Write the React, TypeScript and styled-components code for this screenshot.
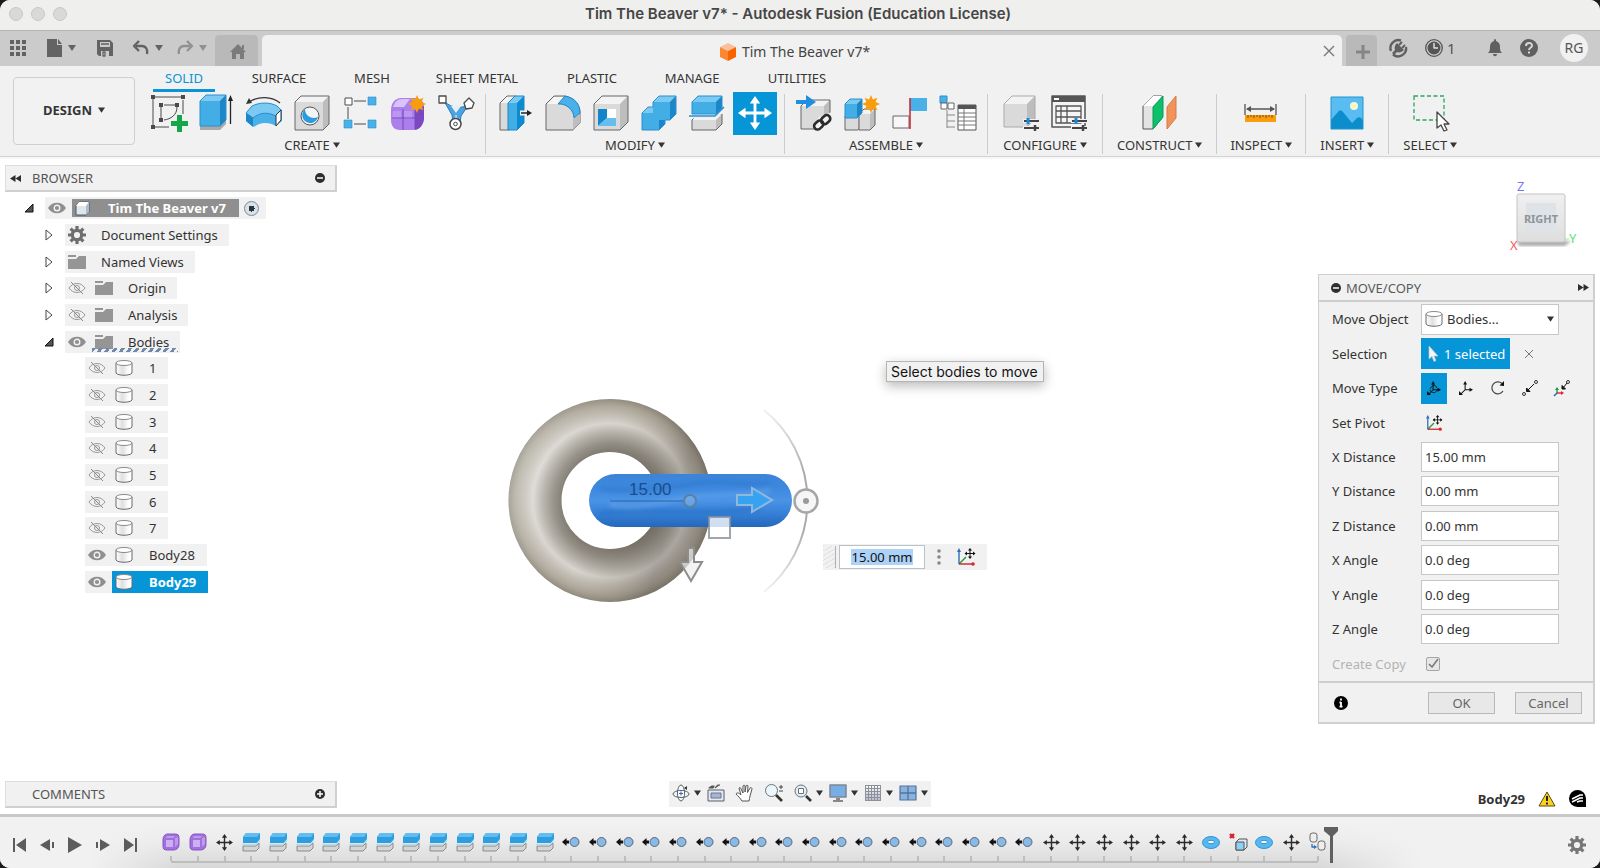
import React from "react";
import styled, { createGlobalStyle, css } from "styled-components";

const UI_FONT = '"Noto Sans", "Open Sans", sans-serif';
const SYSTEM_FONT = 'Inter, "Liberation Sans", sans-serif';

const GlobalStyle = createGlobalStyle`
  * { box-sizing: border-box; }
  body { margin: 0; background: #1b1b1b; font-family: ${UI_FONT}; font-size: 13px; line-height: 18px; color: #333; }
  button, input, select { font: inherit; color: inherit; }
  svg { display: block; flex: none; overflow: visible; }
`;

/* ---------- window frame ---------- */

const Window = styled.div`
  display: flex;
  flex-direction: column;
  min-height: 100vh;
  background: #fff;
  border-radius: 10px;
  overflow: hidden;
`;

const TitleBar = styled.header`
  display: grid;
  grid-template-columns: 100px 1fr 104px;
  align-items: center;
  height: 31px;
  padding: 0 0 2px;
  background: #efefee;
  border-bottom: 1px solid #b4b4b4;
`;

const Lights = styled.div`
  display: flex;
  gap: 8px;
  padding-left: 9px;
`;

const Light = styled.span`
  width: 14px;
  height: 14px;
  border-radius: 50%;
  background: #dad9d8;
  border: 1px solid #c8c7c6;
`;

const Title = styled.h1`
  margin: 0;
  font: 600 15px/20px ${SYSTEM_FONT};
  text-align: center;
  color: #464646;
`;

const QuickBar = styled.div`
  display: flex;
  align-items: stretch;
  height: 35px;
  background: #cbcbcb;
  color: #636363;
`;

const QuickTools = styled.div`
  display: flex;
  align-items: center;
  width: 215px;
  padding: 2px 0 3px 9px;
`;

const IconButton = styled.button<{ $w?: number; $dim?: boolean }>`
  display: flex;
  align-items: center;
  justify-content: center;
  gap: 6px;
  width: ${(p) => (p.$w ? `${p.$w}px` : "auto")};
  padding: 0;
  border: 0;
  background: none;
  color: inherit;
  opacity: ${(p) => (p.$dim ? 0.55 : 1)};
`;

const EdgeTab = styled.button<{ $w: number }>`
  display: flex;
  align-items: center;
  justify-content: center;
  width: ${(p) => p.$w}px;
  margin: 4px 4px 0 0;
  padding: 2px 0 0 3px;
  border: 0;
  border-radius: 4px 4px 0 0;
  background: #b9b9b9;
  color: #7b7b7b;
`;

const DocumentTab = styled.div`
  display: grid;
  grid-template-columns: 12px 1fr 26px;
  align-items: center;
  flex: 1;
  margin: 4px 4px 0 0;
  border-radius: 5px 5px 0 0;
  background: #f1f1f1;
  color: #444;
`;

const DocumentName = styled.div`
  grid-column: 2;
  display: flex;
  align-items: center;
  justify-content: center;
  gap: 6px;
  padding-top: 2px;
  font-size: 14px;
`;

const Account = styled.div`
  display: flex;
  align-items: center;
  gap: 18px;
  width: 219px;
  padding: 0 12px 1px 8px;
  color: #606060;
`;

const Jobs = styled.button`
  display: flex;
  align-items: center;
  gap: 4px;
  margin-right: 14px;
  padding: 0;
  border: 0;
  background: none;
  font-size: 15px;
  color: #555;
`;

const Avatar = styled.button`
  width: 28px;
  height: 28px;
  margin-left: auto;
  padding: 0;
  border: 0;
  border-radius: 50%;
  background: #f1f1f1;
  font-size: 14px;
  color: #555;
`;

/* ---------- ribbon ---------- */

const Ribbon = styled.div`
  display: flex;
  height: 91px;
  background: #f1f1f1;
  border-bottom: 1px solid #d2d2d2;
  color: #353535;
`;

const Workspace = styled.button`
  display: flex;
  align-items: center;
  justify-content: center;
  gap: 6px;
  width: 122px;
  height: 68px;
  margin: 11px 4px 0 13px;
  padding: 0 0 3px;
  border: 1px solid #cfcfcf;
  border-radius: 4px;
  background: #f2f2f2;
  font-weight: 700;
`;

const RibbonBody = styled.div`
  flex: 1;
`;

const TabList = styled.nav`
  display: flex;
  height: 26px;
  padding-left: 14px;
`;

const RibbonTab = styled.a<{ $w: number; $active?: boolean }>`
  width: ${(p) => p.$w}px;
  margin-right: 20px;
  padding-top: 3px;
  line-height: 19px;
  text-align: center;
  text-decoration: none;
  color: inherit;
  white-space: nowrap;
  border-bottom: 3px solid transparent;
  ${(p) => p.$active && css`color: #0a94d6; border-color: #0a94d6;`}
`;

const Groups = styled.div`
  display: flex;
`;

const Group = styled.section<{ $pad: number }>`
  display: flex;
  flex-direction: column;
  align-items: center;
  padding: 0 ${(p) => p.$pad}px 1px;
  &:not(:last-child) {
    border-right: 1px solid transparent;
    border-image: linear-gradient(transparent 3px, #cdcdcd 3px) 1;
  }
`;

const Tools = styled.div`
  display: flex;
`;

const Tool = styled.button<{ $active?: boolean }>`
  display: flex;
  align-items: center;
  justify-content: center;
  width: 44px;
  height: 43px;
  margin: 0 2px;
  padding: 0 0 1px;
  border: 0;
  background: ${(p) => (p.$active ? "#0696d7" : "none")};
`;

const GroupLabel = styled.button`
  display: flex;
  align-items: center;
  gap: 3px;
  padding: 2px 0 0;
  border: 0;
  background: none;
  line-height: 16px;
`;

/* ---------- viewport ---------- */

const Viewport = styled.main`
  position: relative;
  flex: 1;
  display: grid;
  grid-template-columns: 332px 1fr 277px;
  grid-template-rows: 1fr 28px;
  padding: 6px 5px 5px 5px;
  border-top: 2px solid #f7f7f7;
  background: #fff;
`;

const Scene = styled.div`
  position: absolute;
  left: 500px;
  top: 231px;
`;

const PanelHeader = styled.div`
  display: flex;
  align-items: center;
  height: 27px;
  padding: 0 10px 0 4px;
  background: #f1f1f1;
  border: 1px solid #dedede;
  border-right: 2px solid #d0d0d0;
  border-bottom: 2px solid #cfcfcf;
  color: #555;
`;

const PanelName = styled.h2<{ $indent?: number }>`
  flex: 1;
  margin: 0;
  padding-left: ${(p) => p.$indent ?? 0}px;
  font-size: 13px;
  font-weight: 400;
`;

const Side = styled.aside`
  position: relative;
`;

const Tree = styled.ul`
  display: grid;
  grid-template-rows: repeat(15, 1fr);
  align-items: center;
  height: 400px;
  margin: 3px 0 0;
  padding: 0;
  list-style: none;
`;

const TreeRow = styled.li<{ $depth: number }>`
  display: flex;
  align-items: center;
  height: 22px;
  padding-left: ${(p) => p.$depth * 20}px;
`;

const Twist = styled.button`
  display: flex;
  align-items: center;
  width: 20px;
  padding: 0;
  border: 0;
  background: none;
`;

const RowBody = styled.div`
  position: relative;
  display: flex;
  align-items: center;
  height: 22px;
  background: #f1f1f1;
  color: #333;
`;

const EyeButton = styled.button`
  width: 27px;
  padding: 0 0 0 3px;
  border: 0;
  background: none;
`;

const RowName = styled.span<{ $tone?: "grey" | "blue"; $gap: number; $end: number }>`
  display: flex;
  align-items: center;
  gap: ${(p) => p.$gap}px;
  height: ${(p) => (p.$tone === "grey" ? 18 : 22)}px;
  padding: 0 ${(p) => p.$end}px 0 3px;
  white-space: nowrap;
  ${(p) => p.$tone && css`
    background: ${p.$tone === "grey" ? "#8f8f8f" : "#0696d7"};
    color: #fff;
    font-weight: 700;
  `}
`;

const Hatch = styled.span`
  position: absolute;
  left: 27px;
  right: 2px;
  bottom: 1px;
  height: 4px;
  background: repeating-linear-gradient(125deg, #6f89ad 0 3px, transparent 3px 6px);
`;

const Activate = styled.input`
  appearance: none;
  width: 15px;
  height: 15px;
  margin: 0 7px 0 5px;
  border: 1px solid #7b8794;
  border-radius: 50%;
  background: radial-gradient(circle, #333 0 3px, #d6e2ee 3px 100%);
`;

const CommentsBar = styled(PanelHeader)`
  grid-column: 1;
  grid-row: 2;
`;

/* ---------- floating canvas items ---------- */

const Tooltip = styled.div`
  position: absolute;
  left: 886px;
  top: 202px;
  padding: 0 5px 0 4px;
  background: #f1f1f1;
  border: 1px solid #b5b5b5;
  box-shadow: 0 4px 12px rgba(0, 0, 0, 0.28);
  font: 14px/19px ${SYSTEM_FONT};
  color: #111;
  white-space: nowrap;
`;

const FloatBar = styled.div`
  position: absolute;
  left: 823px;
  top: 385px;
  display: flex;
  align-items: center;
  height: 26px;
  padding-right: 8px;
  background: #f1f1f1;
`;

const Grip = styled.span`
  width: 13px;
  height: 22px;
  margin: 0 3px 0 0;
  border-right: 1px solid #b0b0b0;
  background: repeating-linear-gradient(150deg, #e2e2e2 0 1px, #f1f1f1 1px 4px);
`;

const FloatInput = styled.input`
  width: 86px;
  height: 24px;
  padding: 3px 11px;
  border: 1px solid #b8c2c8;
  background: linear-gradient(#acd2f8, #acd2f8) content-box, #fff;
  text-align: center;
  color: #111;
`;

const CubeBox = styled.div`
  position: absolute;
  right: 20px;
  top: 18px;
`;

/* ---------- move dialog ---------- */

const Dialog = styled.form`
  position: relative;
  grid-column: 3;
  grid-row: 1;
  align-self: start;
  margin-top: 109px;
  background: #f1f1f1;
  border: 1px solid #cfcfcf;
  border-right-width: 2px;
  border-bottom-width: 2px;
`;

const DialogHeader = styled.div`
  display: flex;
  align-items: center;
  gap: 5px;
  height: 27px;
  padding: 0 4px 0 12px;
  border-bottom: 2px solid #cdcdcd;
  color: #5a5a5a;
`;

const Fields = styled.div`
  display: grid;
  grid-template-rows: repeat(11, 1fr);
  height: 379px;
`;

const Field = styled.div<{ $dim?: boolean }>`
  display: grid;
  grid-template-columns: 89px 1fr;
  align-items: center;
  padding-left: 13px;
  color: ${(p) => (p.$dim ? "#b3b3b3" : "#333")};
`;

const Control = styled.div`
  position: relative;
  display: flex;
  align-items: center;
  gap: 6px;
  width: 138px;
`;

const TextBox = styled.input`
  width: 100%;
  height: 30px;
  padding: 0 3px;
  border: 1px solid #c6c6c6;
  background: #fff;
`;

const Picker = styled.select`
  appearance: none;
  width: 100%;
  height: 31px;
  padding: 0 20px 0 25px;
  border: 1px solid #c6c6c6;
  border-radius: 0;
  background: #fff;
`;

const PickerIcon = styled.span<{ $end?: boolean }>`
  position: absolute;
  ${(p) => (p.$end ? "right: 5px;" : "left: 4px;")}
  pointer-events: none;
`;

const Selected = styled.button`
  display: flex;
  align-items: center;
  flex: none;
  gap: 5px;
  width: 89px;
  height: 31px;
  padding: 0 0 0 7px;
  border: 0;
  background: #0696d7;
  color: #fff;
  white-space: nowrap;
`;

const Mode = styled.button<{ $active?: boolean }>`
  display: flex;
  align-items: center;
  justify-content: center;
  flex: none;
  width: 26px;
  height: 31px;
  padding: 0;
  border: 0;
  background: ${(p) => (p.$active ? "#0696d7" : "none")};
`;

const CheckBox = styled.input`
  appearance: none;
  width: 14px;
  height: 14px;
  margin: 0 0 0 5px;
  border: 1px solid #a5a5a5;
  border-radius: 2px;
  background: #e6e6e6;
`;

const Tick = styled.span`
  position: absolute;
  left: 7px;
  pointer-events: none;
`;

const DialogFooter = styled.div`
  display: flex;
  align-items: center;
  height: 41px;
  padding: 0 11px 0 15px;
  border-top: 2px solid #cdcdcd;
`;

const Action = styled.button`
  width: 67px;
  height: 22px;
  margin-left: 20px;
  padding: 0;
  border: 1px solid #b9b9b9;
  background: #e8e8e8;
  line-height: 18px;
  color: #666;
  &:first-of-type { margin-left: auto; }
`;

/* ---------- bottom ---------- */

const NavButton = styled.button<{ $caret?: boolean }>`
  display: flex;
  align-items: center;
  gap: 4px;
  margin-right: ${(p) => (p.$caret ? 6 : 11)}px;
  padding: 0;
  border: 0;
  background: none;
`;

const NavBar = styled.div`
  grid-column: 1 / -1;
  grid-row: 2;
  justify-self: center;
  display: flex;
  align-items: center;
  height: 26px;
  padding: 0 0 2px 3px;
  background: #f1f1f1;
  ${NavButton}:last-child { margin-right: 3px; }
`;

const Status = styled.div`
  grid-column: 3;
  grid-row: 2;
  justify-self: end;
  display: flex;
  align-items: center;
  gap: 13px;
  padding: 7px 9px 0 0;
  font-weight: 700;
`;

const Timeline = styled.footer`
  display: flex;
  align-items: stretch;
  height: 54px;
  border-top: 3px solid #c9c9c9;
  background:
    linear-gradient(90deg, #f1f1f1 90px, transparent 180px, transparent calc(100% - 280px), #f1f1f1 calc(100% - 180px)),
    linear-gradient(#f3f3f3, #ececec 45%, #d8d8d8);
  color: #5c5c5c;
`;

const Playback = styled.div`
  display: flex;
  align-items: center;
  gap: 14px;
  width: 158px;
  padding: 4px 0 0 13px;
`;

const Track = styled.ol`
  display: grid;
  grid-template-columns: repeat(44, 1fr);
  width: 1173px;
  margin: 10px 0 0;
  padding: 0;
  list-style: none;
`;

const Feature = styled.li`
  display: flex;
  flex-direction: column;
  align-items: center;
  height: 36px;
  background:
    linear-gradient(#bdbdbd, #bdbdbd) 50% 29px / 2px 5px no-repeat,
    linear-gradient(#bdbdbd, #bdbdbd) 0 34px / 100% 2px no-repeat;
  &:first-child { background-position: 50% 29px, 13px 34px; }
  &:last-child { background-position: 50% 29px, -13px 34px; }
`;

const FeatureButton = styled.button`
  display: flex;
  align-items: center;
  justify-content: center;
  width: 24px;
  height: 30px;
  padding: 0;
  border: 0;
  background: none;
`;

const Playhead = styled.div`
  margin: 10px auto 0 -7px;
`;

const Settings = styled(IconButton)`
  padding: 4px 14px 0 0;
`;

/* ---------- icons ---------- */

const INK = "#4a4a4a";
const SKY = "#4ab0e8";

const Caret = ({ w = 7 }: { w?: number }) => (
  <svg width={w} height="6" viewBox="0 0 8 6"><path d="M0 0h8L4 6z" fill="currentColor" /></svg>
);

const Svg = ({ s = 36, h, box, children }: { s?: number; h?: number; box?: string; children: React.ReactNode }) => (
  <svg width={s} height={h ?? s} viewBox={box ?? `0 0 ${s} ${h ?? s}`} fill="none" strokeLinejoin="round">{children}</svg>
);

const Star = ({ x, y, r = 8 }: { x: number; y: number; r?: number }) => {
  const pts = Array.from({ length: 16 }, (_, i) => {
    const a = (i * Math.PI) / 8;
    const k = i % 2 ? r * 0.55 : r;
    return `${x + k * Math.sin(a)},${y - k * Math.cos(a)}`;
  }).join(" ");
  return <polygon points={pts} fill="#f99d0c" />;
};

const Box = ({ x = 1, y = 1, w = 34, h = 34, d = 6, front = "#dadada", top = "#f3f3f3", side = "#bdbdbd", stroke = "#666" }) => (
  <g>
    <path d={`M${x} ${y + d}l${d} ${-d}H${x + w}V${y + h - d}l${-d} ${d}H${x}z`} fill={front} />
    <path d={`M${x} ${y + d}l${d} ${-d}H${x + w}l${-d} ${d}z`} fill={top} />
    <path d={`M${x + w} ${y}v${h - d}l${-d} ${d}V${y + d}z`} fill={side} />
    <path d={`M${x} ${y + d}l${d} ${-d}H${x + w}V${y + h - d}l${-d} ${d}H${x}z`} stroke={stroke} />
  </g>
);

const MoveCross = ({ s, c }: { s: number; c: string }) => (
  <Svg s={s} box="0 0 36 36">
    <path d="M18 6v24M6 18h24" stroke={c} strokeWidth="3" />
    <path d="M18 0l5.500 8h-11zM18 36l5.500-8h-11zM0 18l8-5.500v11zM36 18l-8-5.500v11z" fill={c} />
  </Svg>
);

const ICONS: Record<string, React.ReactNode> = {
  sketch: (
    <Svg>
      <path d="M5 2h28M3 4v28M33 5v14M5 32h14M11 12v11M14 10h12M27 12c0 8-6 12-13 13" stroke={INK} />
      <path d="M1 0h4v4H1zM31 0h4v4h-4zM1 30h4v4H1zM9 8h4v4H9zM25 8h4v4h-4zM9 23h4v4H9z" fill={INK} />
      <path d="M27 20h5v6h6v5h-6v6h-5v-6h-6v-5h6z" fill="#12a84a" />
    </Svg>
  ),
  extrude: (
    <Svg>
      <path d="M2 31h20l6-6v4l-6 6H2z" fill="#a9a9a9" />
      <Box x={2} y={0} w={26} h={31} front="#43ade6" top="#7cc9f2" side="#1b87c9" stroke="#2a8fce" />
      <path d="M32.500 5v24" stroke="#222" strokeWidth="1.300" /><path d="M32.500 0l2.500 6h-5z" fill="#222" />
    </Svg>
  ),
  revolve: (
    <Svg>
      <path d="M3 7C12 1 26 1 34 8" stroke="#333" strokeWidth="1.300" /><path d="M0 9l3-6 3 5z" fill="#333" />
      <path d="M0 19l6-8c8-4 18-4 25 0l5 4v11l-6 5c-7-4-16-4-22 1l-8-6z" fill="#4ab0e8" />
      <path d="M0 18l6-7c8-4 18-4 25 0l4 4-5 6c-8-4-16-4-23 2z" fill="#7cc9f2" stroke="#2a8fce" />
      <path d="M7 23v9l-7-6v-8z" fill="#1b87c9" />
      <path d="M30 20l5-5v10l-5 6z" fill="#fff" stroke="#333" />
    </Svg>
  ),
  hole: (
    <Svg><Box /><circle cx="16" cy="21" r="9" fill="#f4f4f4" stroke="#555" /><path d="M11 14a8 8 0 1 0 13 8c-6 3-13-1-13-8z" fill="#2a9be0" /></Svg>
  ),
  pattern: (
    <Svg>
      <path d="M12 6h12M6 12v12M12 29h12" stroke={INK} />
      <path d="M3 3h7v7H3z" fill="#fff" stroke={INK} />
      <path d="M26 2h8v8h-8zM2 25h8v8H2zM26 25h8v8h-8z" fill={SKY} stroke="#2a8fce" strokeWidth=".6" />
    </Svg>
  ),
  form: (
    <Svg>
      <path d="M1 15c0-7 4-12 10-12h14c6 0 9 4 9 9v11c0 7-5 12-11 12H10C4 35 1 31 1 25z" fill="#ac80ec" />
      <path d="M3 12c2-5 4-8 9-8h8l-6 8c-4 0-8 0-11 0z" fill="#dac2fb" /><path d="M25 16l9-5v13c-1 6-4 10-9 11z" fill="#7c49c0" />
      <path d="M3 16h8v8H2zM14 16h8v8h-8z" fill="#bb97f2" />
      <path d="M2 23h23l9-5M13 14v21M25 15v19" stroke="#7748bd" />
      <Star x={27} y={9} r={9} />
    </Svg>
  ),
  emboss: (
    <Svg>
      <path d="M6 6c8 8 18 8 25 3l-8 12-1 7h-7l-1-8z" fill="#4ca3df" stroke="#2c7db8" />
      <path d="M13 11h10l-5 7z" fill="#e6f0f7" /><path d="M18 20v6" stroke="#bfe0f5" strokeWidth="1.500" />
      <path d="M1 1h7v7H1zM26 8l5-5 5 5-2 5-6 1z" fill="#fff" stroke={INK} strokeWidth="1.300" />
      <circle cx="17.500" cy="29" r="5.500" fill="#fff" stroke={INK} strokeWidth="1.500" /><circle cx="17.500" cy="29" r="1.800" stroke={INK} />
    </Svg>
  ),
  pressPull: (
    <Svg>
      <Box x={3} y={1} w={16} h={34} d={7} />
      <Box x={11} y={1} w={16} h={34} d={7} front="#43ade6" top="#7cc9f2" side="#0c8bd0" stroke="#1b87c9" />
      <path d="M23 18h9" stroke="#f1f1f1" strokeWidth="5" /><path d="M24 18h7" stroke="#222" strokeWidth="1.500" /><path d="M30 15l5 3-5 3z" fill="#222" />
    </Svg>
  ),
  fillet: (
    <Svg>
      <path d="M1 9l8-8h11c10 2 15 10 15 17v10l-7 7H1z" fill="#dadada" stroke="#666" /><path d="M2 9l7-7h10l-6 7z" fill="#f6f6f6" />
      <path d="M13 9l7-8c10 2 15 8 15 17l-6 5c0-8-8-15-16-14z" fill={SKY} stroke="#1b87c9" />
      <path d="M28 24l7-5v9l-7 7z" fill="#bdbdbd" />
    </Svg>
  ),
  shell: (
    <Svg><Box d={8} /><path d="M5 14h18v17H5z" fill="#fff" /><path d="M5 14h9v9l-9 8z" fill="#1286c8" /><path d="M14 23h9v8H5z" fill="#66bdf0" /></Svg>
  ),
  combine: (
    <Svg>
      <path d="M1 18l6-6h5V7l6-6h17v18l-6 6h-5v4l-6 6H1z" fill="#43ade6" />
      <path d="M1 18l6-6h5v6zM12 7l6-6h17l-6 6z" fill="#7cc9f2" /><path d="M29 7l6-6v18l-6 6zM18 25h6v4l-6 6z" fill="#1b87c9" />
      <path d="M1 18l6-6h5V7l6-6h17v18l-6 6h-5v4l-6 6H1z" stroke="#2a8fce" />
    </Svg>
  ),
  split: (
    <Svg>
      <Box x={3} y={19} w={30} h={16} /><path d="M0 21h27l8-8" stroke="#f1f1f1" strokeWidth="5" />
      <Box x={3} y={1} w={30} h={18} front="#43ade6" top="#7cc9f2" side="#1b87c9" stroke="#2a8fce" />
      <path d="M0 21h26l9-9" stroke="#2a8fce" strokeWidth="1.500" />
    </Svg>
  ),
  move: <MoveCross s={34} c="#fff" />,
  insertLink: (
    <Svg>
      <Box x={5} y={5} w={29} h={29} />
      <path d="M0 5h10V0l10 7-10 7V9H0z" fill="#1f8fe0" />
      <path d="M17 31l6-9 13-5v18H20z" fill="#f1f1f1" />
      <g stroke="#2b2b2b" strokeWidth="2.600"><rect x="17.500" y="27" width="10" height="7" rx="3.500" transform="rotate(-42 22 30)" /><rect x="25" y="21" width="10" height="7" rx="3.500" transform="rotate(-42 30 25)" /></g>
    </Svg>
  ),
  component: (
    <Svg>
      <Box x={1} y={17} w={17} h={18} d={4} /><Box x={15} y={14} w={16} h={21} d={5} />
      <Box x={1} y={4} w={17} h={19} d={5} front="#43ade6" top="#7cc9f2" side="#1b87c9" stroke="#2a8fce" /><Star x={27} y={9} r={9} />
    </Svg>
  ),
  joint: (
    <Svg><path d="M18 3h17v13H18z" fill={SKY} /><path d="M1 21h16v12H1z" fill="#f7f7f7" stroke="#666" /><path d="M18 3v31" stroke="#c8202c" strokeWidth="1.500" /></Svg>
  ),
  bom: (
    <Svg>
      <path d="M0 1h7v7H0z" fill={SKY} stroke="#2a8fce" /><path d="M1 8h6v6H1zM8 8h6v6H8z" fill="#fff" stroke="#666" />
      <path d="M7 15v18M7 20h8M7 26h8M7 32h8" stroke="#888" />
      <path d="M18 10h18v25H18z" fill="#fff" stroke="#555" /><path d="M18 10h18v4H18z" fill="#555" />
      <path d="M18 18h18M18 22h18M18 26h18M18 30h18M24 14v21" stroke="#777" />
    </Svg>
  ),
  configure: (
    <Svg>
      <Box x={1} y={1} w={31} h={31} d={8} stroke="#aaa" />
      <path d="M20 26h16M20 33h16" stroke="#f1f1f1" strokeWidth="4" /><path d="M21 26h15M21 33h15" stroke="#444" strokeWidth="2" />
      <path d="M25 23v6" stroke="#1689d8" strokeWidth="3" /><path d="M32 30v6" stroke="#444" strokeWidth="2.500" />
    </Svg>
  ),
  configTable: (
    <Svg>
      <path d="M1 1h33v31H1z" fill="#f5f5f5" stroke="#555" strokeWidth="1.500" /><path d="M1 1h33v6H1z" fill="#555" /><path d="M3 3h5v2H3z" fill="#fff" />
      <path d="M5 11h25v17H5zM5 16h25M5 22h25M10 11v17M16 11v17" stroke="#555" strokeWidth="1.300" />
      <path d="M20 26h16M20 33h16" stroke="#f1f1f1" strokeWidth="4" /><path d="M21 26h15M21 33h15" stroke="#444" strokeWidth="2" />
      <path d="M25 23v6" stroke="#1689d8" strokeWidth="3" /><path d="M32 30v6" stroke="#444" strokeWidth="2.500" />
    </Svg>
  ),
  construct: (
    <Svg>
      <path d="M1 11L11 1h9v22L11 34H1z" fill="#e3e3e3" stroke="#555" /><path d="M1 11L11 1h9l-9 10z" fill="#fff" />
      <path d="M11 12L21 1v21L11 34z" fill="#0cc06c" stroke="#0a9a56" /><path d="M25 12l9-11v22l-9 11z" fill="#f2935a" stroke="#d67a42" />
    </Svg>
  ),
  inspect: (
    <Svg>
      <path d="M2 9v11M33 9v11M4 14h27" stroke="#555" strokeWidth="1.300" /><path d="M3 14l5-3v6zM32 14l-5-3v6z" fill="#555" />
      <path d="M2 20h31v7H2z" fill="#f99d0c" /><path d="M5 20v3M8 20v2M11 20v3M14 20v2M17 20v3M20 20v2M23 20v3M26 20v2M29 20v3" stroke="#7a4b00" />
    </Svg>
  ),
  insert: (
    <Svg>
      <path d="M2 2h32v32H2z" fill="#59bdf2" /><circle cx="25" cy="11" r="4" fill="#fdf6c8" />
      <path d="M2 25l7-8c1-2 4-2 5 0l9 11 5-5c1-1 3-1 4 0l2 2v9H2z" fill="#0b8ecb" /><path d="M2 2h32v32H2z" stroke="#2094cf" />
    </Svg>
  ),
  select: (
    <Svg>
      <path d="M2 1h30v24H2z" stroke="#2aa65c" strokeWidth="1.300" strokeDasharray="4 2.500" />
      <path d="M25 17v16l4-3 3 6 3-1-3-6h5z" fill="#fff" stroke="#444" strokeWidth="1.300" />
    </Svg>
  ),
};

const Eye = ({ off }: { off?: boolean }) => (
  <Svg s={18} h={12}>
    {off ? (
      <g stroke="#999">
        <path d="M1 6c4-6 12-6 16 0-4 6-12 6-16 0z" /><circle cx="9" cy="6" r="2.500" /><path d="M3 0l12 12" stroke="#888" />
      </g>
    ) : (
      <g><path d="M0 6c4-7 14-7 18 0-4 7-14 7-18 0z" fill="#8f8f8f" /><circle cx="9" cy="6" r="2.800" stroke="#f1f1f1" strokeWidth="1.400" /></g>
    )}
  </Svg>
);

const Cylinder = () => (
  <Svg s={18} h={16}>
    <defs><linearGradient id="cyl"><stop offset="0" stopColor="#fff" /><stop offset=".4" stopColor="#dfe0e4" /><stop offset=".8" stopColor="#fff" /></linearGradient></defs>
    <path d="M1 3v10c2 3 14 3 16 0V3z" fill="url(#cyl)" stroke="#6a6a6a" />
    <ellipse cx="9" cy="3" rx="8" ry="2.500" fill="#fff" stroke="#8a8a8a" />
  </Svg>
);

const Folder = () => (
  <Svg s={18} h={14}><path d="M0 0h8v2H0zM0 4h8l3-3h7v13H0z" fill="#959595" /></Svg>
);

const Gear = ({ s = 18, c = "#6e6e6e" }) => (
  <Svg s={s} box="0 0 18 18">
    <circle cx="9" cy="9" r="4.700" stroke={c} strokeWidth="3.200" />
    {[0, 45, 90, 135].map((a) => (
      <path key={a} d="M9 0v3.500M9 14.500V18" stroke={c} strokeWidth="3.200" transform={`rotate(${a} 9 9)`} />
    ))}
  </Svg>
);

const BodyCube = () => (
  <Svg s={15}><path d="M1 5l3-4h10v10l-3 3H1z" fill="#dfe6ee" stroke="#4c5866" /><path d="M1 5l3-4h10l-3 4z" fill="#fff" /><path d="M11 5l3-4v10l-3 3z" fill="#aebccb" /></Svg>
);

const Disc = ({ plus }: { plus?: boolean }) => (
  <Svg s={10}><circle cx="5" cy="5" r="5" fill="#2e2e2e" /><path d={plus ? "M2 5h6M5 2v6" : "M2 5h6"} stroke="#fff" strokeWidth="1.500" /></Svg>
);

const Chevrons = ({ flip }: { flip?: boolean }) => (
  <Svg s={11} h={7}><path d={flip ? "M0 0l5.500 3.500L0 7zM5.500 0L11 3.500 5.500 7z" : "M5.500 0L0 3.500 5.500 7zM11 0L5.500 3.500 11 7z"} fill="#2e2e2e" /></Svg>
);

const Pivot = ({ s = 18 }: { s?: number }) => (
  <Svg s={s} box="0 0 18 18">
    <path d="M2 16V3" stroke="#2b6fb5" strokeWidth="1.400" /><path d="M0 4l2-4 2 4z" fill="#2b6fb5" />
    <path d="M2 16l7-7" stroke="#21993c" strokeWidth="1.400" /><path d="M2 16h13" stroke="#c8202c" strokeWidth="1.400" /><circle cx="16" cy="16" r="1.800" fill="#e0222e" />
    <path d="M13 1v9M8.500 5.500h9" stroke="#111" strokeWidth="1" />
    <path d="M13 0l2 2.500h-4zM13 11l2-2.500h-4zM7.500 5.500l2.500-2v4zM18.500 5.500l-2.500-2v4z" fill="#111" />
  </Svg>
);

const Triad = ({ ring }: { ring?: boolean }) => (
  <Svg s={14} box="0 0 16 16">
    <path d="M7 2v8h7M7 10l-5 5" stroke="#111" strokeWidth="1.200" />
    <path d="M4.800 4L7 0l2.200 4zM12 7.800l4 2.200-4 2.200zM0 16v-4.500L4.500 16z" fill="#111" />
    {ring && <path d="M4 9c1-5 7-5 7-1M3 10c3 5 8 4 9-1" stroke="#111" />}
  </Svg>
);

const MODES = [
  { name: "Free move", icon: <Triad ring /> },
  { name: "Translate", icon: <Triad /> },
  { name: "Rotate", icon: <Svg s={14}><path d="M11 2.500A6 6 0 1 0 12 10" stroke="#444" strokeWidth="1.200" /><path d="M8.500 4.500L13 5V0z" fill="#111" /></Svg> },
  { name: "Point to point", icon: <Svg s={16}><path d="M12 4l-6 6" stroke="#111" /><path d="M4.500 8v3.500H8z" fill="#111" stroke="#111" /><circle cx="14" cy="2" r="1.500" stroke="#333" /><circle cx="2" cy="14" r="1.500" stroke="#333" /></Svg> },
  { name: "Point to position", icon: <Svg s={16}><path d="M13 3L9 8" stroke="#111" /><path d="M8 5.500V9h3.500z" fill="#111" stroke="#111" /><circle cx="14" cy="2" r="1.500" stroke="#333" /><path d="M3 13V9" stroke="#21993c" strokeWidth="1.400" /><path d="M3 13h5" stroke="#e0222e" strokeWidth="1.400" /><path d="M3 13l-3 3" stroke="#2b6fb5" strokeWidth="1.600" /><path d="M1 10l2-3 2 3z" fill="#21993c" /><path d="M7 11l3 2-3 2z" fill="#e0222e" /></Svg> },
];

const NAV = [
  { name: "Orbit", caret: true, icon: <Svg s={18}><g stroke="#56616b"><ellipse cx="9" cy="9" rx="3.500" ry="8" fill="#f8f8f8" /><ellipse cx="9" cy="10" rx="8" ry="3.500" /></g><path d="M6 7h6v5H6z" fill="#f8f8f8" /><path d="M9 7.500v4M7 9.500h4" stroke="#1f6fb5" /><path d="M12 4l3-2v4z" fill="#333" /></Svg> },
  { name: "Look at", icon: <Svg s={18}><path d="M1 6h16v11H1z" fill="#e3e8f2" stroke="#56616b" /><path d="M4 9h10v5H4z" fill="#a9b4ce" stroke="#6b7692" /><path d="M2 4l3-2h2l-1 2zM8 4l3-3h2" fill="#555" stroke="#555" strokeWidth="1.200" /></Svg> },
  { name: "Pan", icon: <Svg s={18}><path d="M6 17C4 14 2 12 0 10c1-2 3-1 5 1L3 4c1-1 2 0 2 1l2 4V2c0-1 2-1 2 0v6l1-6c0-1 2-1 2 0l-.500 6.500L14 4c1-1 2 0 2 1l-2 7c0 2-1 3-1 5z" fill="#fff" stroke="#555" /></Svg> },
  { name: "Zoom", icon: <Svg s={18}><circle cx="6.500" cy="6.500" r="6" fill="#edf6fa" stroke="#687580" /><path d="M11 11l6 6" stroke="#333" strokeWidth="2.600" /><path d="M14 3h4M16 1v4M14 7h4" stroke="#444" /></Svg> },
  { name: "Fit", caret: true, icon: <Svg s={18}><circle cx="7" cy="7" r="6" fill="#e6edf2" stroke="#687580" /><path d="M4.500 4.500h5v5h-5z" fill="#fff" stroke="#687580" /><path d="M12 12l5 5" stroke="#333" strokeWidth="2.600" /></Svg> },
  { name: "Display settings", caret: true, icon: <Svg s={18}><path d="M1 1h16v12H1z" fill="#78aee4" stroke="#7c8694" strokeWidth="1.500" /><path d="M7 14h4v2h3v2H4v-2h3z" fill="#888" /></Svg> },
  {
    name: "Grid and snaps",
    caret: true,
    icon: (
      <Svg s={18}>
        <defs><linearGradient id="grid" x1="0" y1="0" x2="0" y2="1"><stop offset="0" stopColor="#fff" /><stop offset="1" stopColor="#b4b8ca" /></linearGradient></defs>
        <path d="M1 1h16v16H1z" fill="url(#grid)" />
        <path d="M1.500 1v16M4.500 1v16M7.500 1v16M10.500 1v16M13.500 1v16M16.500 1v16M1 1.500h16M1 4.500h16M1 7.500h16M1 10.500h16M1 13.500h16M1 16.500h16" stroke="#8d8f99" />
      </Svg>
    ),
  },
  { name: "Viewports", caret: true, icon: <Svg s={18}><path d="M1 2h16v14H1z" fill="#8ab2e0" stroke="#52749c" strokeWidth="1.200" /><path d="M9 2v14M1 9h16" stroke="#52749c" strokeWidth="1.300" /></Svg> },
];

const FEATURE_ICONS: Record<string, React.ReactNode> = {
  form: (
    <Svg s={18}>
      <path d="M1 7c0-4 2-6 5-6h7c3 0 4 1 4 4v6c0 4-2 6-6 6H5c-3 0-4-1-4-4z" fill="#a071dc" stroke="#8757c6" />
      <path d="M4 7h7v7H4z" fill="#cdb0f2" /><path d="M13 5l3-1v7l-3 3z" fill="#bd9aea" /><path d="M5 3h8l-2 2H4z" fill="#bd9aea" />
    </Svg>
  ),
  move: <MoveCross s={17} c="#2a2a2a" />,
  split: (
    <Svg s={18} h={19}>
      <path d="M1 13h13l3-3v5l-3 3H1z" fill="#d5d5d5" stroke="#777" strokeWidth=".8" />
      <path d="M1 4l3-4h14v6l-3 4H1z" fill="#2d9fe0" /><path d="M1 4l3-4h14l-3 4z" fill="#63bdf0" /><path d="M0 11.500h14l4-4" stroke="#b9dcf2" strokeWidth="1.500" />
    </Svg>
  ),
  offset: (
    <Svg s={18} h={12}><circle cx="12.500" cy="6" r="4.500" fill="#8ab9e6" stroke="#55687c" /><path d="M4 6h3" stroke="#111" strokeWidth="3" /><path d="M0 6l4.500-4v8z" fill="#111" /></Svg>
  ),
  torus: <Svg s={18} h={13}><ellipse cx="9" cy="6.500" rx="8.500" ry="6" fill="#56b8f0" stroke="#2f93cf" /><ellipse cx="9" cy="6" rx="3.500" ry="1.700" fill="#fff" stroke="#2f93cf" /></Svg>,
  remove: (
    <Svg s={18}><path d="M1 1l4 4M5 1L1 5" stroke="#d4202c" strokeWidth="2.400" /><path d="M7 9l3-3h8v8l-3 3H7z" fill="#d9ecf8" stroke="#555" /><path d="M7 9h8v8H7z" fill="#8fd0f5" stroke="#555" /></Svg>
  ),
  copy: (
    <Svg s={18}><g fill="#eee" stroke="#666"><rect x="1" y="0" width="7" height="9" rx="2.500" /><rect x="9" y="8" width="7" height="9" rx="2.500" /></g><path d="M3 11v3h3" stroke="#2b6fb5" strokeWidth="1.300" /><path d="M5 12l3 2-3 2z" fill="#2b6fb5" /></Svg>
  ),
};

/* ---------- data ---------- */

const QUICK = [
  { name: "Data panel", w: 18, icon: <Svg s={16}><path d="M0 0h4v4H0zM6 0h4v4H6zM12 0h4v4h-4zM0 6h4v4H0zM6 6h4v4H6zM12 6h4v4h-4zM0 12h4v4H0zM6 12h4v4H6zM12 12h4v4h-4z" fill="currentColor" /></Svg> },
  { name: "File", w: 69, caret: true, icon: <Svg s={15} h={18}><path d="M0 0h10v6h5v12H0z" fill="currentColor" /><path d="M11 0l4 5h-4z" fill="currentColor" /></Svg> },
  { name: "Save", w: 17, icon: <Svg s={16}><path d="M0 0h13l3 3v13H2l-2-2z" fill="currentColor" /><path d="M3 2h10v5H3zM4 11h8v5H4z" fill="#cbcbcb" /><path d="M4 4h8M6 12h2v4H6z" stroke="currentColor" strokeWidth="1.300" /></Svg> },
  { name: "Undo", w: 70, caret: true, icon: <Svg s={16} h={14}><path d="M3 5h6c4 0 6 4 5 8" stroke="currentColor" strokeWidth="2.400" /><path d="M6 0L1 5l5 5" stroke="currentColor" strokeWidth="2.400" /></Svg> },
  { name: "Redo", w: 18, caret: true, dim: true, icon: <Svg s={16} h={14}><path d="M13 5H7C3 5 1 9 2 13" stroke="currentColor" strokeWidth="2.400" /><path d="M10 0l5 5-5 5" stroke="currentColor" strokeWidth="2.400" /></Svg> },
];

const TABS: [string, number][] = [["SOLID", 62], ["SURFACE", 88], ["MESH", 58], ["SHEET METAL", 112], ["PLASTIC", 78], ["MANAGE", 82], ["UTILITIES", 88]];

const GROUPS = [
  { name: "CREATE", pad: 5, tools: ["sketch", "extrude", "revolve", "hole", "pattern", "form", "emboss"] },
  { name: "MODIFY", pad: 5, tools: ["pressPull", "fillet", "shell", "combine", "split", "move"] },
  { name: "ASSEMBLE", pad: 5, tools: ["insertLink", "component", "joint", "bom"] },
  { name: "CONFIGURE", pad: 9, tools: ["configure", "configTable"] },
  { name: "CONSTRUCT", pad: 14, tools: ["construct"] },
  { name: "INSPECT", pad: 13, tools: ["inspect"] },
  { name: "INSERT", pad: 14, tools: ["insert"] },
  { name: "SELECT", pad: 14, tools: ["select"] },
];

type Node = { name: string; depth: number; kind: "gear" | "folder" | "body"; twist?: "open" | "closed"; eye?: "on" | "off"; selected?: boolean; pending?: boolean };

const NODES: Node[] = [
  { name: "Document Settings", depth: 2, kind: "gear", twist: "closed" },
  { name: "Named Views", depth: 2, kind: "folder", twist: "closed" },
  { name: "Origin", depth: 2, kind: "folder", twist: "closed", eye: "off" },
  { name: "Analysis", depth: 2, kind: "folder", twist: "closed", eye: "off" },
  { name: "Bodies", depth: 2, kind: "folder", twist: "open", eye: "on", pending: true },
  ...["1", "2", "3", "4", "5", "6", "7"].map((name): Node => ({ name, depth: 3, kind: "body", eye: "off" })),
  { name: "Body28", depth: 3, kind: "body", eye: "on" },
  { name: "Body29", depth: 3, kind: "body", eye: "on", selected: true },
];

const FEATURES = [
  "form", "form", "move",
  ...Array(12).fill("split"), ...Array(18).fill("offset"), ...Array(6).fill("move"),
  "torus", "remove", "torus", "move", "copy",
];

const VALUES = [["X Distance", "15.00 mm"], ["Y Distance", "0.00 mm"], ["Z Distance", "0.00 mm"], ["X Angle", "0.0 deg"], ["Y Angle", "0.0 deg"], ["Z Angle", "0.0 deg"]];

const PLAYBACK = [
  { name: "To start", w: 13, h: 14, d: "M0 0h2v14H0zM13 0v14L3 7z" },
  { name: "Step back", w: 14, h: 12, d: "M10 0v12L0 6zM12 3h2v6h-2z" },
  { name: "Play", w: 14, h: 16, d: "M0 0l14 8L0 16z" },
  { name: "Step forward", w: 14, h: 12, d: "M4 0v12l10-6zM0 3h2v6H0z" },
  { name: "To end", w: 13, h: 14, d: "M11 0h2v14h-2zM0 0v14l10-7z" },
];

/* ---------- sections ---------- */

const TwistIcon = ({ open }: { open: boolean }) =>
  open ? (
    <Svg s={8}><path d="M8 0v8H0z" fill="#555" stroke="#111" /></Svg>
  ) : (
    <Svg s={8} h={10}><path d="M1 0v10l6-5z" fill="#fff" stroke="#444" /></Svg>
  );

const Row = ({ node }: { node: Node }) => (
  <TreeRow $depth={node.depth}>
    {node.twist && <Twist type="button" aria-label={`Expand ${node.name}`}><TwistIcon open={node.twist === "open"} /></Twist>}
    {!node.twist && <Twist as="span" />}
    <RowBody>
      {node.eye && <EyeButton type="button" aria-label={`Visibility of ${node.name}`}><Eye off={node.eye === "off"} /></EyeButton>}
      <RowName $tone={node.selected ? "blue" : undefined} $gap={node.kind === "body" ? 16 : 15} $end={node.depth === 3 ? 12 : 11}>
        {node.kind === "gear" ? <Gear /> : node.kind === "folder" ? <Folder /> : <Cylinder />}
        {node.name}
      </RowName>
      {node.pending && <Hatch />}
    </RowBody>
  </TreeRow>
);

const Model = () => (
  <svg width="330" height="230" viewBox="500 390 330 230" role="img" aria-label="Ring with selected body">
    <defs>
      <radialGradient id="ring" gradientUnits="userSpaceOnUse" cx="610" cy="500.500" r="101.500">
        <stop offset=".47" stopColor="#78736b" /><stop offset=".56" stopColor="#8f8b83" /><stop offset=".66" stopColor="#b3b0a9" />
        <stop offset=".76" stopColor="#dddbd6" /><stop offset=".83" stopColor="#c8c4bc" /><stop offset=".93" stopColor="#aea89c" /><stop offset="1" stopColor="#8f897e" />
      </radialGradient>
      <linearGradient id="shade" x1="0" y1="0" x2="1" y2=".3">
        <stop offset="0" stopColor="#f1f5f0" stopOpacity=".25" /><stop offset=".5" stopColor="#a89b86" stopOpacity=".1" /><stop offset="1" stopColor="#4c463c" stopOpacity=".35" />
      </linearGradient>
      <linearGradient id="pill" x1="0" y1="0" x2="0" y2="1">
        <stop offset="0" stopColor="#3b84da" /><stop offset=".25" stopColor="#3d88de" /><stop offset=".5" stopColor="#4a93e6" /><stop offset=".75" stopColor="#357fd6" /><stop offset="1" stopColor="#2468bb" />
      </linearGradient>
      <linearGradient id="arc" gradientUnits="userSpaceOnUse" x1="0" y1="406" x2="0" y2="596">
        <stop offset="0" stopColor="#aaa" stopOpacity=".1" /><stop offset=".35" stopColor="#aaa" /><stop offset=".65" stopColor="#aaa" /><stop offset="1" stopColor="#aaa" stopOpacity=".1" />
      </linearGradient>
      <filter id="soft"><feGaussianBlur stdDeviation="2" /></filter>
      <clipPath id="pillClip"><rect x="589" y="474" width="203" height="53" rx="26.500" /></clipPath>
    </defs>
    <circle cx="610" cy="500.500" r="75" fill="none" stroke="url(#ring)" strokeWidth="53" />
    <circle cx="610" cy="500.500" r="75" fill="none" stroke="url(#shade)" strokeWidth="53" />
    <path d="M589 500.500a26.500 26.500 0 0 1 26.500-26.500h150a26.500 26.500 0 0 1 0 53h-150a26.500 26.500 0 0 1-26.500-26.500z" fill="url(#pill)" />
    <g clipPath="url(#pillClip)">
      <g filter="url(#soft)" fill="none">
        <path d="M610 504c30 8 60-6 90-8s50 0 70-6" stroke="#67a8ef" strokeWidth="4" opacity=".6" />
        <path d="M600 489c40 4 70-2 100-6s40 4 70 0" stroke="#2f74c8" strokeWidth="4" opacity=".6" />
        <path d="M600 514c40-8 90 4 160-6" stroke="#2a6fc4" strokeWidth="5" opacity=".6" />
      </g>
    </g>
    <path d="M610 501h73" stroke="#2e63a0" />
    <text x="629" y="495" fontFamily="Liberation Sans" fontSize="17" fill="#1b4c8c">15.00</text>
    <circle cx="690" cy="501" r="6" fill="#7fb0e4" fillOpacity=".6" stroke="#5b7fa6" strokeWidth="2" />
    <path d="M737 495h15v-7l20 12-20 12v-7h-15z" fill="#36a2f0" stroke="#8fb9dc" strokeWidth="2" />
    <path d="M764 410A117 117 0 0 1 764 592" fill="none" stroke="url(#arc)" strokeWidth="2" />
    <circle cx="806" cy="501" r="11.500" fill="#f6f6f6" stroke="#a6a6a6" strokeWidth="2.500" /><circle cx="806" cy="501" r="3" fill="#9a9a9a" />
    <path d="M709 517h21v21h-21z" fill="#fff" fillOpacity=".78" stroke="#88909a" strokeOpacity=".8" strokeWidth="2" />
    <path d="M688 548h6v14h8l-11 19-11-19h8z" fill="#eee" fillOpacity=".7" stroke="#8d8d8d" strokeWidth="2" />
  </svg>
);

const ViewCube = () => (
  <svg width="70" height="72" viewBox="1510 178 70 72" role="img" aria-label="View cube, right">
    <defs>
      <linearGradient id="face" x1="0" y1="0" x2="0" y2="1"><stop offset="0" stopColor="#f0f0f0" /><stop offset="1" stopColor="#dedede" /></linearGradient>
      <filter id="blur"><feGaussianBlur stdDeviation="1.500" /></filter>
    </defs>
    <path d="M1517 242h54l-6 5h-46z" fill="#aaa" filter="url(#blur)" />
    <rect x="1517" y="195" width="48" height="48" rx="2" fill="url(#face)" stroke="#c4c4c4" />
    <path d="M1526 204h30v29h-30z" fill="#dfe2e6" />
    <path d="M1565 240h4" stroke="#8ce89c" />
    <g fontFamily="Noto Sans" fontSize="13">
      <text x="1541" y="224" textAnchor="middle" fontWeight="700" fontSize="11" fill="#8e949a">RIGHT</text>
      <text x="1517" y="192" fill="#7d76f2">Z</text><text x="1510" y="251" fill="#f2595c">X</text><text x="1569" y="244" fill="#5fdf76">Y</text>
    </g>
  </svg>
);

const MoveDialog = () => (
  <Dialog onSubmit={(e) => e.preventDefault()}>
    <DialogHeader><Disc /><PanelName>MOVE/COPY</PanelName><Chevrons flip /></DialogHeader>
    <Fields>
      <Field>
        <label htmlFor="object">Move Object</label>
        <Control>
          <Picker id="object" defaultValue="Bodies..."><option>Bodies...</option></Picker>
          <PickerIcon><Cylinder /></PickerIcon><PickerIcon $end><Caret /></PickerIcon>
        </Control>
      </Field>
      <Field>
        <span>Selection</span>
        <Control>
          <Selected type="button">
            <Svg s={11} h={16}><path d="M1 0v13l3-2.500 2 5 2-1-2-4.500h4z" fill="#f4f4f4" stroke="#b9c4cc" strokeWidth=".7" /></Svg>
            1 selected
          </Selected>
          <Mode type="button" aria-label="Clear selection"><Svg s={8}><path d="M0 0l8 8M8 0L0 8" stroke="#777" /></Svg></Mode>
        </Control>
      </Field>
      <Field>
        <span>Move Type</span>
        <Control>{MODES.map((m, i) => <Mode key={m.name} type="button" aria-label={m.name} $active={i === 0}>{m.icon}</Mode>)}</Control>
      </Field>
      <Field>
        <span>Set Pivot</span>
        <Control><Mode type="button" aria-label="Set pivot"><Pivot s={16} /></Mode></Control>
      </Field>
      {VALUES.map(([label, value]) => (
        <Field key={label}>
          <label htmlFor={label}>{label}</label>
          <Control><TextBox id={label} defaultValue={value} /></Control>
        </Field>
      ))}
      <Field $dim>
        <label htmlFor="copy">Create Copy</label>
        <Control><CheckBox id="copy" type="checkbox" defaultChecked disabled /><Tick><Svg s={11}><path d="M1 6l3 3 6-8" stroke="#777" strokeWidth="1.500" /></Svg></Tick></Control>
      </Field>
    </Fields>
    <DialogFooter>
      <Svg s={14}><circle cx="7" cy="7" r="7" fill="#000" /><path d="M7 6v5M5.500 6.500H7M5.500 10.700h3M7 2.500v2" stroke="#fff" strokeWidth="1.800" /></Svg>
      <Action type="submit">OK</Action><Action type="button">Cancel</Action>
    </DialogFooter>
  </Dialog>
);

export default function App() {
  return (
    <Window>
      <GlobalStyle />
      <TitleBar>
        <Lights><Light /><Light /><Light /></Lights>
        <Title>Tim The Beaver v7* - Autodesk Fusion (Education License)</Title>
      </TitleBar>
      <QuickBar>
        <QuickTools>
          {QUICK.map((q) => (
            <IconButton key={q.name} type="button" aria-label={q.name} $w={q.w} $dim={q.dim}>{q.icon}{q.caret && <Caret w={8} />}</IconButton>
          ))}
        </QuickTools>
        <EdgeTab type="button" aria-label="Home" $w={43}>
          <Svg s={16} h={15}><path d="M8 0l8 8h-2v7h-4v-5H6v5H2V8H0zM12 1h2v4h-2z" fill="currentColor" /></Svg>
        </EdgeTab>
        <DocumentTab>
          <DocumentName>
            <Svg s={16} h={18}><path d="M8 0l8 4-8 4-8-4z" fill="#f9c09a" /><path d="M0 4l8 4v10l-8-4z" fill="#fb8633" /><path d="M16 4L8 8v10l8-4z" fill="#f96400" /></Svg>
            Tim The Beaver v7*
          </DocumentName>
          <IconButton type="button" aria-label="Close document"><Svg s={10}><path d="M0 0l10 10M10 0L0 10" stroke="#777" strokeWidth="1.400" /></Svg></IconButton>
        </DocumentTab>
        <EdgeTab type="button" aria-label="New document" $w={31}><Svg s={14}><path d="M7 0v14M0 7h14" stroke="#868686" strokeWidth="3" /></Svg></EdgeTab>
        <Account>
          <IconButton type="button" aria-label="Extensions">
            <Svg s={18}>
              <path d="M12 1.500A8 8 0 0 0 2 12M4 15.500A8 8 0 0 0 17 8" stroke="currentColor" strokeWidth="2.400" />
              <path d="M3 14l3-3c-1-3 0-5 2-7l7 7c-2 2-5 3-7 2l-3 3z" fill="currentColor" />
              <path d="M10 6l3-3M13 9l3-3" stroke="currentColor" strokeWidth="2" />
            </Svg>
          </IconButton>
          <Jobs type="button"><Svg s={18}><circle cx="9" cy="9" r="8.300" stroke="currentColor" strokeWidth="1.300" /><circle cx="9" cy="9" r="6.500" fill="currentColor" /><path d="M9 4v5h4" stroke="#ddd" strokeWidth="1.500" /></Svg>1</Jobs>
          <IconButton type="button" aria-label="Notifications"><Svg s={14} h={18}><path d="M7 0c1 0 1 1 1 2 3 1 4 3 4 6 0 4 1 5 2 6H0c1-1 2-2 2-6 0-3 1-5 4-6 0-1 0-2 1-2zM5 15h4c0 3-4 3-4 0z" fill="currentColor" /></Svg></IconButton>
          <IconButton type="button" aria-label="Help"><Svg s={18}><circle cx="9" cy="9" r="9" fill="currentColor" /><path d="M6 7c0-4 6-4 6-.500C12 9 9 8.500 9 11M9 12.500v2" stroke="#d6d6d6" strokeWidth="2" /></Svg></IconButton>
          <Avatar type="button">RG</Avatar>
        </Account>
      </QuickBar>
      <Ribbon>
        <Workspace type="button">DESIGN <Caret /></Workspace>
        <RibbonBody>
          <TabList>{TABS.map(([name, w], i) => <RibbonTab key={name} href="#" $w={w} $active={i === 0}>{name}</RibbonTab>)}</TabList>
          <Groups>
            {GROUPS.map((g) => (
              <Group key={g.name} $pad={g.pad}>
                <Tools>{g.tools.map((t) => <Tool key={t} type="button" aria-label={t} $active={t === "move"}>{ICONS[t]}</Tool>)}</Tools>
                <GroupLabel type="button">{g.name}<Caret /></GroupLabel>
              </Group>
            ))}
          </Groups>
        </RibbonBody>
      </Ribbon>
      <Viewport>
        <Scene><Model /></Scene>
        <Tooltip role="tooltip">Select bodies to move</Tooltip>
        <FloatBar>
          <Grip />
          <FloatInput aria-label="Distance" defaultValue="15.00 mm" />
          <IconButton type="button" aria-label="More" $w={28}><Svg s={4} h={16}><g fill="#888"><circle cx="2" cy="2" r="1.800" /><circle cx="2" cy="8" r="1.800" /><circle cx="2" cy="14" r="1.800" /></g></Svg></IconButton>
          <IconButton type="button" aria-label="Set pivot" $w={26}><Pivot /></IconButton>
        </FloatBar>
        <CubeBox><ViewCube /></CubeBox>
        <Side>
          <PanelHeader><Chevrons /><PanelName $indent={11}>BROWSER</PanelName><Disc /></PanelHeader>
          <Tree>
            <TreeRow $depth={1}>
              <Twist type="button" aria-label="Collapse document"><TwistIcon open /></Twist>
              <RowBody>
                <EyeButton type="button" aria-label="Visibility of document"><Eye /></EyeButton>
                <RowName $tone="grey" $gap={18} $end={13}><BodyCube />Tim The Beaver v7</RowName>
                <Activate type="radio" aria-label="Activate component" defaultChecked />
              </RowBody>
            </TreeRow>
            {NODES.map((n) => <Row key={n.name} node={n} />)}
          </Tree>
        </Side>
        <MoveDialog />
        <CommentsBar><PanelName $indent={22}>COMMENTS</PanelName><Disc plus /></CommentsBar>
        <NavBar>{NAV.map((n) => <NavButton key={n.name} type="button" aria-label={n.name} $caret={n.caret}>{n.icon}{n.caret && <Caret />}</NavButton>)}</NavBar>
        <Status>
          Body29
          <Svg s={18} h={16}><path d="M9 1l8 14H1z" fill="#fbd21c" stroke="#5a4a10" strokeLinejoin="round" /><path d="M9 5v5M9 11.500v2" stroke="#222" strokeWidth="2" /></Svg>
          <Svg s={17}><path d="M8.500 0a8.500 8.500 0 0 1 8.500 8.500V17H8.500a8.500 8.500 0 0 1 0-17z" fill="#000" /><path d="M3 9l8-4h3M3 12l8-4h3M8 12l3-1h3" stroke="#fff" strokeWidth="1.400" /></Svg>
        </Status>
      </Viewport>
      <Timeline>
        <Playback>
          {PLAYBACK.map((p) => <IconButton key={p.name} type="button" aria-label={p.name}><Svg s={p.w} h={p.h}><path d={p.d} fill="currentColor" /></Svg></IconButton>)}
        </Playback>
        <Track>{FEATURES.map((f, i) => <Feature key={i}><FeatureButton type="button" aria-label={`${f} ${i + 1}`}>{FEATURE_ICONS[f]}</FeatureButton></Feature>)}</Track>
        <Playhead><Svg s={14} h={36}><path d="M0 0h14v4L9 9v27H6V9L0 4z" fill="#606060" /></Svg></Playhead>
        <Settings type="button" aria-label="Timeline settings"><Gear c="#777" /></Settings>
      </Timeline>
    </Window>
  );
}
